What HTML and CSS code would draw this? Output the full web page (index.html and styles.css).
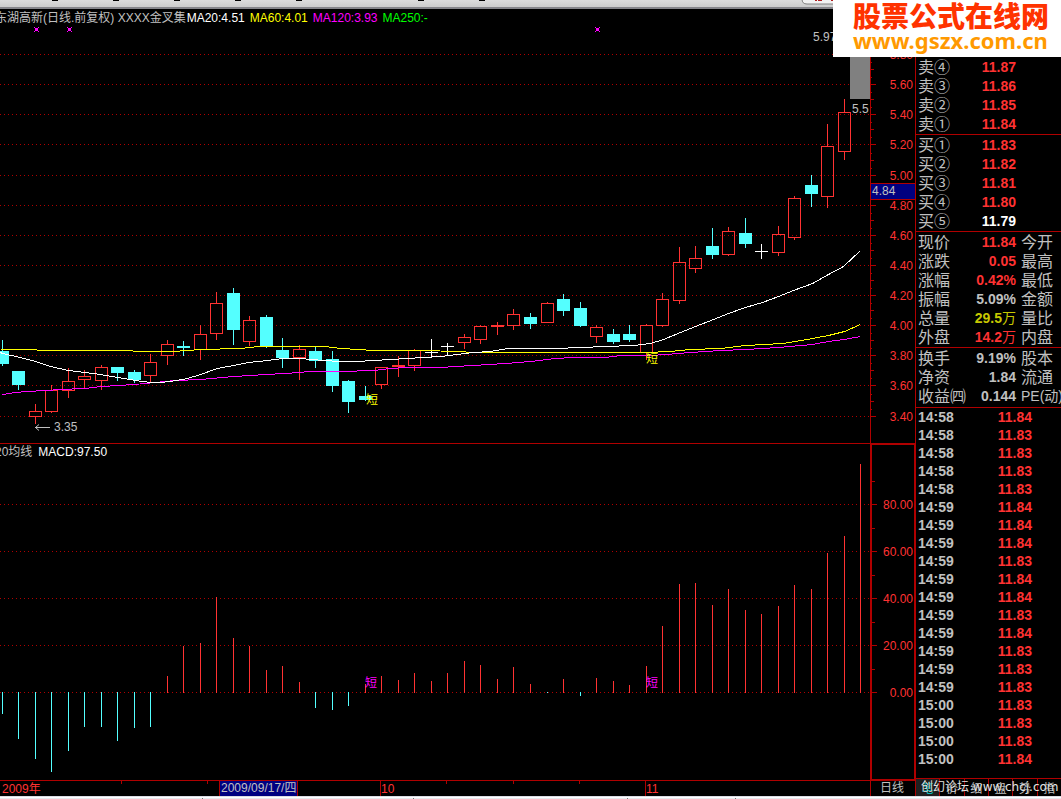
FILE: index.html
```
<!DOCTYPE html>
<html lang="zh-CN">
<head>
    <meta charset="UTF-8">
    <meta name="viewport" content="width=device-width, initial-scale=1.0">
    <title>东湖高新 日线</title>
    <link rel="stylesheet" href="styles.css">
</head>
<body>
    <div class="toolbar">
        <svg width="840" height="9" viewBox="0 0 840 9">
            <path d="M52 .5h6M113 .5h6M174 .5h6M235 .5h6M296 .5h6M418 .5h6M479 .5h6" stroke="#000"/>
            <path d="M802 -4v3q0 5 5 5h40v-8z" fill="#f2f2f2" stroke="#808080"/>
            <path d="M815 .5h2M818 .5h4M831 .5h2" stroke="#b02020"/>
        </svg>
    </div>

    <div class="workspace">
        <div class="charts">
            <div class="row price-row">
                <div class="plot">
                    <div class="legend">
                        <span class="name">东湖高新(日线.前复权) XXXX金叉集</span>
                        <span class="ma20">MA20:4.51</span>
                        <span class="ma60">MA60:4.01</span>
                        <span class="ma120">MA120:3.93</span>
                        <span class="ma250">MA250:-</span>
                    </div>
                    <svg id="priceChart" class="price-chart" viewBox="0 27 870 416" preserveAspectRatio="xMaxYMid meet"></svg>
                </div>
                <div class="axis">
                    <svg id="priceAxis" class="price-axis" viewBox="871 9 44 434"></svg>
                </div>
            </div>
            <div class="row macd-row">
                <div class="plot">
                    <div class="legend macd-legend">
                        <span class="name">20均线</span>
                        <span class="ma20">MACD:97.50</span>
                    </div>
                    <svg id="macdChart" class="macd-chart" viewBox="0 462 870 318" preserveAspectRatio="xMaxYMid meet"></svg>
                </div>
                <div class="axis boxed">
                    <svg id="macdAxis" class="macd-axis" viewBox="872 445 42 334"></svg>
                </div>
            </div>
            <div class="row time-row">
                <div class="plot">
                    <svg class="time-axis" viewBox="0 781 870 15" preserveAspectRatio="xMaxYMid meet">
                        <path class="tick" d="M121.5 781v3M207.5 781v3M446.5 781v3M513.5 781v3M579.5 781v3M380.5 781v15M645.5 781v15"/>
                        <rect class="cursor" x="219.500" y="780" width="78" height="17"/>
                        <text class="up-text" x="2" y="793">2009年</text>
                        <text class="grey-text" x="221" y="792">2009/09/17/四</text>
                        <text class="up-text" x="381" y="793">10</text>
                        <text class="up-text" x="646" y="793">11</text>
                    </svg>
                </div>
                <div class="axis period">日线</div>
            </div>
        </div>

        <div class="quotes">
            <table class="depth">
                <tr><th>卖④</th><td>11.87</td><th></th></tr>
                <tr><th>卖③</th><td>11.86</td><th></th></tr>
                <tr><th>卖②</th><td>11.85</td><th></th></tr>
                <tr><th>卖①</th><td>11.84</td><th></th></tr>
            </table>
            <table class="depth">
                <tr><th>买①</th><td>11.83</td><th></th></tr>
                <tr><th>买②</th><td>11.82</td><th></th></tr>
                <tr><th>买③</th><td>11.81</td><th></th></tr>
                <tr><th>买④</th><td>11.80</td><th></th></tr>
                <tr><th>买⑤</th><td class="white">11.79</td><th></th></tr>
            </table>
            <table class="depth">
                <tr><th>现价</th><td>11.84</td><th>今开</th></tr>
                <tr><th>涨跌</th><td>0.05</td><th>最高</th></tr>
                <tr><th>涨幅</th><td>0.42%</td><th>最低</th></tr>
                <tr><th>振幅</th><td class="grey">5.09%</td><th>金额</th></tr>
                <tr><th>总量</th><td class="yellow">29.5<span class="unit">万</span></td><th>量比</th></tr>
                <tr><th>外盘</th><td>14.2<span class="unit">万</span></td><th>内盘</th></tr>
            </table>
            <table class="depth basics">
                <tr><th>换手</th><td class="grey">9.19%</td><th>股本</th></tr>
                <tr><th>净资</th><td class="grey">1.84</td><th>流通</th></tr>
                <tr><th>收益㈣</th><td class="grey">0.144</td><th class="pe">PE(动)</th></tr>
            </table>
            <table class="ticks" id="ticks"></table>
            <div class="tabs">
                <button class="active">笔</button>
                <button>价</button>
                <button>细</button>
                <button>盘</button>
                <button>势</button>
                <button>指</button>
                <div class="watermark">创幻论坛 www.chcj.com</div>
            </div>
        </div>
    </div>

    <div class="statusbar">
        <svg width="740" height="3" viewBox="0 0 740 3">
            <path d="M202 2.500h1M413 2.500h1M627 2.500h1M735 2.500h1" stroke="#777"/>
        </svg>
    </div>

    <div class="banner">
        <div class="banner-name">股票公式在线网</div>
        <div class="banner-url">www.gszx.com.cn</div>
    </div>

    <script src="chart.js"></script>
</body>
</html>
```
FILE: styles.css
```
* {
    box-sizing: border-box;
}
body {
    margin: 0;
    min-height: 100vh;
    display: flex;
    flex-direction: column;
    position: relative;
    background-color: #000;
    color: #c0c0c0;
    font-family: "Liberation Sans", "Noto Sans CJK SC", sans-serif;
    font-size: 12px;
    overflow: hidden;
}
svg {
    display: block;
}
svg text {
    font-size: 12px;
}
.toolbar {
    height: 9px;
    background: linear-gradient(#dcdcdc, #cccccc);
    border-bottom: 2px solid #85858a;
    overflow: hidden;
}
.workspace {
    display: flex;
    flex: 1;
}
.charts {
    flex: 1;
    min-width: 0;
    display: flex;
    flex-direction: column;
}
.row {
    display: flex;
    border-bottom: 1px solid #b00000;
}
.time-row {
    border-bottom: none;
}
.plot {
    flex: 1;
    min-width: 0;
    overflow: hidden;
}
.plot svg {
    width: 100%;
}
.price-chart {
    height: 416px;
}
.macd-chart {
    height: 318px;
}
.time-axis {
    height: 15px;
}
.legend {
    display: flex;
    gap: 5px;
    height: 18px;
    line-height: 18px;
    margin-left: -5px;
    white-space: nowrap;
}
.price-row .name {
    margin-right: -4px;
}
.macd-legend {
    gap: 6px;
    line-height: 16px;
}
.ma20 {
    color: #fff;
}
.ma60 {
    color: #ff0;
}
.ma120 {
    color: #f0f;
}
.ma250 {
    color: #0f0;
}
.axis {
    width: 46px;
    border-left: 1px solid #b00000;
    border-right: 1px solid #b00000;
}
.axis svg {
    width: 100%;
}
.axis.boxed {
    border: 2px solid #b00000;
    border-top-width: 1px;
    border-bottom-width: 1px;
}
.period {
    text-align: center;
    line-height: 15px;
    padding-right: 2px;
}

/* chart parts */
.grid {
    stroke: #b00000;
    stroke-dasharray: 1 3;
}
.tick {
    stroke: #b00000;
    fill: none;
}
.candle-up {
    stroke: #ff3232;
    fill: none;
}
.candle-down {
    stroke: #54ffff;
    fill: #54ffff;
}
.candle-flat {
    stroke: #fff;
    fill: none;
}
.line {
    fill: none;
    shape-rendering: crispEdges;
}
.line-ma20 {
    stroke: #fff;
}
.line-ma60 {
    stroke: #ff0;
}
.line-ma120 {
    stroke: #f0f;
}
.arrow {
    stroke: #c0c0c0;
    fill: none;
}
.cursor {
    fill: #000080;
    stroke: #b00000;
}
.up-text {
    fill: #ff3232;
}
.grey-text {
    fill: #c0c0c0;
}
.yellow-text {
    fill: #ff0;
}
.magenta-text {
    fill: #f0f;
}

/* quotes panel */
.quotes {
    width: 145px;
    padding-top: 47px;
    overflow: hidden;
}
table {
    border-spacing: 0;
    table-layout: fixed;
    width: 100%;
}
th,
td {
    padding: 0;
    white-space: nowrap;
}
th {
    font-size: 16px;
    font-weight: normal;
    text-align: left;
}
td {
    font-size: 14px;
    font-weight: bold;
    text-align: right;
    color: #ff3232;
}
.depth {
    border-bottom: 1px solid #b00000;
    padding-top: 1px;
}
.depth:first-child {
    padding-top: 2px;
}
.depth.basics {
    padding-bottom: 1px;
}
.depth tr {
    height: 19px;
    line-height: 19px;
}
.depth th:first-child {
    width: 52px;
    padding-left: 2px;
}
.depth td {
    width: 48px;
}
.depth th:last-child {
    padding-left: 5px;
}
.depth .pe {
    font-size: 14px;
}
.ticks {
    border-bottom: 1px solid #b00000;
    padding-bottom: 10px;
}
.ticks tr {
    height: 18px;
    line-height: 18px;
}
.ticks th {
    width: 60px;
    padding-left: 2px;
    font-size: 14px;
    font-weight: bold;
}
.ticks td {
    padding-right: 29px;
}
td.white {
    color: #fff;
}
td.grey {
    color: #c0c0c0;
}
td.yellow {
    color: #c8c800;
}
.unit {
    font-weight: normal;
}
.tabs {
    display: flex;
    position: relative;
    height: 17px;
}
.tabs button {
    flex: 1;
    min-width: 0;
    padding: 0;
    border: none;
    border-left: 1px solid #b00000;
    background: none;
    color: #c0c0c0;
    font: 12px/17px "Noto Sans CJK SC", sans-serif;
}
.tabs .active {
    border-left: none;
    background-color: #202020;
    color: #00e0e0;
}
.watermark {
    position: absolute;
    top: 0;
    left: 5px;
    white-space: nowrap;
    font: 12px/16px "DejaVu Sans", "Noto Sans CJK SC", sans-serif;
    color: #e4e4e4;
    text-shadow: 0 0 2px #000;
}
.statusbar {
    height: 3px;
    background: linear-gradient(#dcdce4 1px, #fff 1px, #fff 2px, #e8e8ee 2px);
}
.banner {
    position: absolute;
    top: 0;
    right: 0;
    width: 228px;
    height: 57px;
    padding-left: 20px;
    background-color: #fff;
    white-space: nowrap;
}
.banner-name {
    font: 900 28px/30px "Noto Sans CJK SC", sans-serif;
    color: #ff3300;
}
.banner-url {
    font: bold 22px/20px "Noto Sans", sans-serif;
    color: #ff9900;
}
```
FILE: chart.js
```
// [x, high, body top, body bottom, low, kind]
const candles = [
    [2, 340, 351, 364, 366, 'down'],
    [18, 371, 371, 385, 390, 'down'],
    [35, 404, 411, 417, 424, 'up'],
    [51, 385, 390, 412, 413, 'up'],
    [68, 368, 381, 391, 398, 'up'],
    [84, 370, 376, 380, 388, 'up'],
    [101, 365, 367, 381, 390, 'up'],
    [117, 367, 367, 373, 381, 'down'],
    [134, 370, 372, 380, 383, 'down'],
    [150, 354, 362, 376, 382, 'up'],
    [167, 340, 344, 356, 365, 'up'],
    [183, 341, 346, 348, 356, 'down'],
    [200, 325, 334, 350, 360, 'up'],
    [216, 292, 303, 334, 340, 'up'],
    [233, 288, 293, 330, 345, 'down'],
    [249, 316, 320, 342, 346, 'up'],
    [266, 315, 317, 347, 348, 'down'],
    [282, 338, 350, 358, 368, 'down'],
    [299, 345, 349, 358, 380, 'up'],
    [315, 347, 351, 361, 368, 'down'],
    [332, 351, 359, 386, 392, 'down'],
    [348, 380, 381, 402, 413, 'down'],
    [365, 386, 396, 400, 401, 'down'],
    [381, 367, 367, 385, 389, 'up'],
    [398, 356, 365, 367, 377, 'up'],
    [414, 349, 350, 366, 371, 'up'],
    [431, 339, 352, 353, 358, 'flat'],
    [447, 343, 346, 347, 355, 'flat'],
    [464, 334, 337, 343, 349, 'up'],
    [480, 325, 326, 340, 344, 'up'],
    [497, 322, 325, 327, 335, 'up'],
    [513, 309, 314, 326, 330, 'up'],
    [530, 313, 317, 324, 329, 'down'],
    [547, 302, 303, 323, 323, 'up'],
    [563, 294, 299, 311, 316, 'down'],
    [580, 302, 308, 326, 327, 'down'],
    [596, 325, 327, 337, 343, 'up'],
    [613, 329, 334, 342, 344, 'down'],
    [629, 325, 334, 340, 342, 'down'],
    [646, 324, 325, 353, 360, 'up'],
    [662, 293, 299, 326, 327, 'up'],
    [679, 247, 262, 301, 304, 'up'],
    [695, 246, 258, 269, 273, 'up'],
    [712, 228, 246, 255, 259, 'down'],
    [728, 227, 231, 255, 256, 'up'],
    [745, 218, 233, 244, 248, 'down'],
    [761, 244, 251, 252, 259, 'flat'],
    [778, 226, 234, 253, 256, 'up'],
    [794, 196, 198, 238, 240, 'up'],
    [811, 175, 185, 194, 207, 'down'],
    [827, 124, 146, 197, 208, 'up'],
    [844, 99, 112, 152, 160, 'up']
];

const ma20 = '0,352 2,353 20,357 35,361 50,366 68,370 100,374 117,377 135,380 150,382 160,382 170,381 187,378 200,374 217,368 233,365 248,362 267,360 282,358 300,358 323,360 340,361 357,361 373,360 390,359 407,358 423,357 440,356 457,354 473,352 490,351 508,348 555,348 580,347 605,346 633,345 650,343 663,339 680,332 695,326 713,319 728,313 745,307 762,302 778,296 793,290 812,283 828,274 843,266 860,250';
const ma60 = '0,349 27,349 45,350 93,350 125,350 140,351 173,351 200,349 240,348 258,346 324,346 341,348 357,349 374,350 423,350 456,351 474,352 645,352 670,351 690,349 720,348 745,345 782,343 795,341 812,338 828,335 844,331 860,324';
const ma120 = '2,394 15,392 27,391 45,390 60,389 84,388 101,386 134,384 175,380 200,379 233,376 266,374 300,372 308,371 340,371 373,370 390,368 406,367 440,367 472,365 505,363 530,361 555,358 572,357 605,357 621,355 650,355 665,354 690,352 720,350 745,349 778,347 812,344 828,341 844,339 860,336';

// end of each bar, zero line is at 692
const macdZero = 692;
const macd = [
    [2, 714], [18, 739], [35, 759], [51, 772], [68, 751], [84, 727], [101, 727], [117, 741], [134, 728], [150, 727],
    [167, 676], [183, 646], [200, 643], [216, 597], [233, 638], [249, 646], [266, 670], [282, 666], [299, 682],
    [315, 708], [332, 710], [348, 706], [365, 684], [381, 676], [398, 680], [414, 673], [431, 681], [447, 673],
    [464, 661], [480, 665], [497, 679], [513, 667], [530, 684], [547, 693], [563, 679], [580, 696], [596, 678],
    [613, 681], [629, 685], [646, 666], [662, 626], [679, 584], [695, 583], [712, 605], [728, 589], [745, 610],
    [761, 614], [778, 606], [794, 585], [811, 589], [827, 553], [844, 536], [860, 464]
];

const priceLevels = [
    [54, '5.80'], [84, '5.60'], [114, '5.40'], [144, '5.20'], [175, '5.00'], [205, '4.80'], [235, '4.60'],
    [265, '4.40'], [295, '4.20'], [325, '4.00'], [355, '3.80'], [385, '3.60'], [416, '3.40']
];
const macdLevels = [[504, '80.00'], [551, '60.00'], [598, '40.00'], [645, '20.00'], [692, '0.00']];

const trades = [
    ['14:58', '11.84'], ['14:58', '11.83'], ['14:58', '11.83'], ['14:58', '11.83'], ['14:58', '11.83'],
    ['14:59', '11.84'], ['14:59', '11.84'], ['14:59', '11.84'], ['14:59', '11.83'], ['14:59', '11.84'],
    ['14:59', '11.84'], ['14:59', '11.83'], ['14:59', '11.84'], ['14:59', '11.83'], ['14:59', '11.83'],
    ['14:59', '11.83'], ['15:00', '11.83'], ['15:00', '11.83'], ['15:00', '11.83'], ['15:00', '11.84']
];

function gridLines(levels) {
    return levels.map(([y]) => `<path class="grid" d="M0 ${y + 0.5}H870"/>`).join('');
}

function drawCandle([x, high, top, bottom, low, kind]) {
    const cx = x + 0.5;
    if (kind === 'flat') {
        return `<path class="candle-flat" d="M${cx} ${high}V${low}M${x - 6} ${top + 0.5}h13"/>`;
    }
    return `<path class="candle-${kind}" d="M${cx} ${high}V${top}M${cx} ${bottom}V${low}"/>
        <rect class="candle-${kind}" x="${x - 5.5}" y="${top + 0.5}" width="12" height="${bottom - top - 1}"/>`;
}

function drawStar(x) {
    return `<path d="M${x} 27h1v1h3v-1h1v1h-1v3h1v1h-1v-1h-3v1h-1v-1h1v-3h-1z" fill="#f0f"/>`;
}

// points are whole pixels, shift them to the pixel centre
function drawLine(name, points) {
    return `<polyline class="line line-${name}" points="${points}" transform="translate(0.5 0.5)"/>`;
}

function drawPrice() {
    document.getElementById('priceChart').innerHTML = `
        ${gridLines(priceLevels)}
        ${candles.map(drawCandle).join('')}
        <rect x="850" y="40" width="20" height="59" fill="#808080"/>
        ${drawLine('ma120', ma120)}
        ${drawLine('ma60', ma60)}
        ${drawLine('ma20', ma20)}
        ${[34, 67, 595].map(drawStar).join('')}
        <path class="arrow" d="M35 427.500H50M39 424.500L35.500 427.500L39 430.500"/>
        <text class="grey-text" x="54" y="431">3.35</text>
        <text class="grey-text" x="813" y="41">5.97</text>
        <text class="grey-text" x="852" y="113">5.5</text>
        <text class="yellow-text" x="366" y="404">短</text>
        <text class="yellow-text" x="646" y="363">短</text>
    `;
}

function drawMacd() {
    const bars = macd.map(([x, y]) => {
        const kind = y > macdZero ? 'down' : 'up';
        return `<path class="candle-${kind}" d="M${x + 0.5} ${macdZero + (kind === 'up' ? 1 : 0)}V${y}"/>`;
    }).join('');
    document.getElementById('macdChart').innerHTML = `
        ${gridLines(macdLevels)}
        ${bars}
        <text class="magenta-text" x="365" y="687">短</text>
        <text class="magenta-text" x="646" y="687">短</text>
    `;
}

function drawAxis(id, levels, step, parts, left, right) {
    let ticks = '';
    levels.forEach(([y]) => {
        ticks += `M${left} ${y + 0.5}h5`;
        for (let i = 1; i < parts; i++) {
            const minor = Math.round(y - step * i / parts) + 0.5;
            ticks += `M${left} ${minor}h${i * 2 === parts ? 3 : 1}`;
        }
    });
    const labels = levels.map(([y, label]) =>
        `<text class="up-text" x="${right}" y="${y + 5}" text-anchor="end">${label}</text>`).join('');
    document.getElementById(id).innerHTML = `<path class="tick" d="${ticks}"/>${labels}`;
}

function drawTrades() {
    document.getElementById('ticks').innerHTML = trades.map(([time, price]) =>
        `<tr><th>${time}</th><td>${price}</td></tr>`).join('');
}

drawPrice();
drawMacd();
drawAxis('priceAxis', priceLevels, 30, 4, 871, 913);
drawAxis('macdAxis', macdLevels, 47, 2, 872, 913);
document.getElementById('priceAxis').innerHTML += `
    <rect class="cursor" x="870" y="183.500" width="46" height="16"/>
    <text class="grey-text" x="872" y="195">4.84</text>
`;
drawTrades();
```
